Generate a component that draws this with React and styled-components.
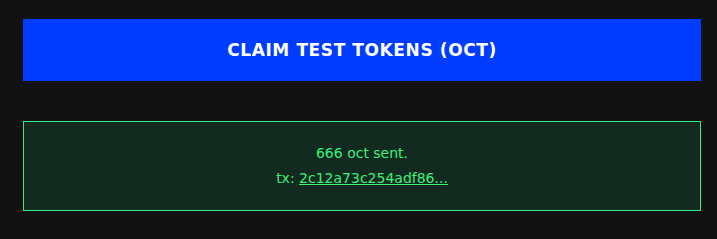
import React from 'react';
import styled, { createGlobalStyle } from 'styled-components';

const GlobalStyle = createGlobalStyle`
  html, body {
    margin: 0;
    padding: 0;
    background: #121212;
  }
`;

const Page = styled.div`
  display: flex;
  flex-direction: column;
  gap: 40px;
  width: 678px;
  padding: 19px 0 0 23px;
`;

const ClaimButton = styled.button`
  height: 62px;
  border: none;
  background: #003cff;
  color: #fff;
  font-family: 'DejaVu Sans', Verdana, sans-serif;
  font-weight: bold;
  font-size: 17px;
  letter-spacing: 0.6px;
  cursor: pointer;
`;

const Notice = styled.div`
  box-sizing: border-box;
  height: 90px;
  display: flex;
  flex-direction: column;
  align-items: center;
  justify-content: center;
  background: #132a20;
  border: 1px solid #33ee88;
  color: #3cf07a;
  font-family: 'DejaVu Sans', Tahoma, sans-serif;
  font-size: 14px;
  line-height: 25px;
`;

const TxLink = styled.a`
  color: inherit;
  text-decoration: underline;
`;

const App = () => (
  <>
    <GlobalStyle />
    <Page>
      <ClaimButton>CLAIM TEST TOKENS (OCT)</ClaimButton>
      <Notice>
        <div>666 oct sent.</div>
        <div>
          tx: <TxLink href="#">2c12a73c254adf86...</TxLink>
        </div>
      </Notice>
    </Page>
  </>
);

export default App;
